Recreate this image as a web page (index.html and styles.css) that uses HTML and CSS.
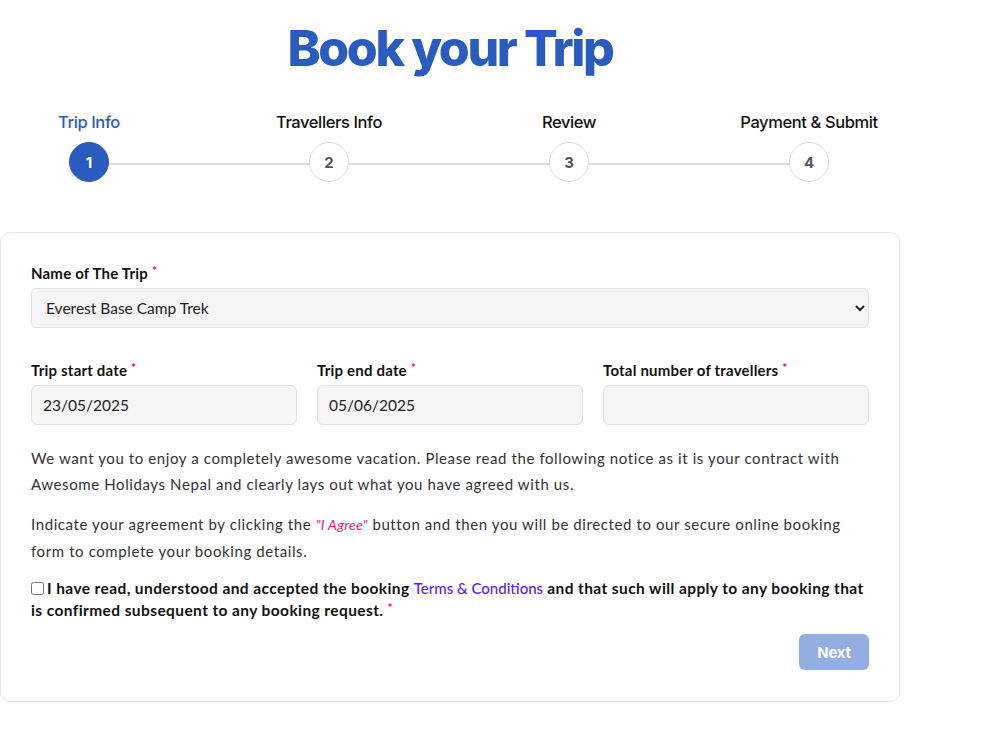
FILE: index.html
```html
<!DOCTYPE html>
<html lang="en">
<head>
    <meta charset="UTF-8">
    <meta name="viewport" content="width=device-width, initial-scale=1.0">
    <title>Book your Trip</title>
    <link rel="stylesheet" href="styles.css">
</head>
<body>
    <div class="wrapper">
        <h1 class="page-title">Book your Trip</h1>

        <div class="steps">
            <div class="steps-line"></div>
            <div class="step active">
                <p class="step-name">Trip Info</p>
                <span class="step-num">1</span>
            </div>
            <div class="step">
                <p class="step-name">Travellers Info</p>
                <span class="step-num">2</span>
            </div>
            <div class="step">
                <p class="step-name">Review</p>
                <span class="step-num">3</span>
            </div>
            <div class="step">
                <p class="step-name">Payment &amp; Submit</p>
                <span class="step-num">4</span>
            </div>
        </div>

        <form class="card">
            <div class="field">
                <label for="trip">Name of The Trip <span class="req">*</span></label>
                <select id="trip">
                    <option>Everest Base Camp Trek</option>
                </select>
            </div>

            <div class="row">
                <div class="field">
                    <label for="start">Trip start date <span class="req">*</span></label>
                    <input id="start" type="text" value="23/05/2025">
                </div>
                <div class="field">
                    <label for="end">Trip end date <span class="req">*</span></label>
                    <input id="end" type="text" value="05/06/2025">
                </div>
                <div class="field">
                    <label for="count">Total number of travellers <span class="req">*</span></label>
                    <input id="count" type="text">
                </div>
            </div>

            <p class="notice">We want you to enjoy a completely awesome vacation. Please read the following notice as it is your contract with Awesome Holidays Nepal and clearly lays out what you have agreed with us.</p>
            <p class="notice">Indicate your agreement by clicking the <em class="agree">"I Agree"</em> button and then you will be directed to our secure online booking form to complete your booking details.</p>

            <label class="terms">
                <input type="checkbox">I have read, understood and accepted the booking <a href="#">Terms &amp; Conditions</a> and that such will apply to any booking that is confirmed subsequent to any booking request. <span class="req">*</span>
            </label>

            <div class="actions">
                <button type="button" class="btn-next">Next</button>
            </div>
        </form>
    </div>
</body>
</html>
```

FILE: styles.css
```css
body {
    margin: 0;
    font-family: "Lato", "Open Sans", sans-serif;
    color: #111;
    background: #fff;
}
.wrapper {
    width: 900px;
}
.page-title {
    margin: 18px 0 0;
    text-align: center;
    font-family: "Inter", sans-serif;
    font-size: 50px;
    font-weight: 800;
    letter-spacing: -2.4px;
    line-height: 60px;
    color: #2a5bbf;
}

/* progress steps */
.steps {
    position: relative;
    display: grid;
    grid-template-columns: repeat(4, 240px);
    width: 960px;
    margin: 33px 0 0 -31px;
}
.steps-line {
    position: absolute;
    left: 120px;
    right: 120px;
    top: 52px;
    height: 2px;
    background: #dcdcdc;
}
.step {
    display: flex;
    flex-direction: column;
    align-items: center;
    position: relative;
}
.step-name {
    margin: 0 0 9px;
    font-family: "Inter", sans-serif;
    font-size: 16.5px;
    font-weight: 500;
    letter-spacing: -0.4px;
    line-height: 22px;
    color: #111;
}
.step-num {
    width: 38px;
    height: 38px;
    border: 1px solid #dcdcdc;
    border-radius: 50%;
    background: #fff;
    display: flex;
    align-items: center;
    justify-content: center;
    font-family: "Inter", sans-serif;
    font-size: 15px;
    font-weight: 700;
    color: #555;
}
.step.active .step-name {
    color: #2a5bbf;
}
.step.active .step-num {
    background: #2a5bbf;
    border-color: #2a5bbf;
    color: #fff;
}

/* form card */
.card {
    margin-top: 50px;
    border: 1px solid #e8e8e8;
    border-radius: 10px;
    padding: 29px 30px 31px;
}
.field {
    display: flex;
    flex-direction: column;
}
.field label {
    font-size: 15px;
    font-weight: 700;
    letter-spacing: 0.2px;
    line-height: 18px;
    margin-bottom: 6px;
    color: #111;
}
.req {
    color: #e01818;
    font-size: 12px;
    vertical-align: 4px;
}
.field select,
.field input {
    height: 40px;
    box-sizing: border-box;
    border: 1px solid #e2e2e2;
    border-radius: 6px;
    background: #f5f5f5;
    font-family: "Lato", sans-serif;
    font-size: 15.5px;
    color: #222;
}
.field select {
    padding: 0 10px;
}
.field input {
    padding: 0 11px;
}
.row {
    display: grid;
    grid-template-columns: repeat(3, 1fr);
    gap: 20px;
    margin-top: 31px;
}
.notice {
    margin: 20px 0 0;
    font-size: 15px;
    letter-spacing: 0.6px;
    line-height: 26px;
    color: #333;
}
.notice + .notice {
    margin-top: 14px;
}
.agree {
    color: #ec1a6c;
    font-size: 14px;
    letter-spacing: 0.3px;
}
.terms {
    display: block;
    margin-top: 14px;
    font-size: 15.5px;
    font-weight: 700;
    letter-spacing: 0.4px;
    line-height: 20px;
    color: #111;
}
.terms input {
    margin: 0 3px 0 0;
    width: 13px;
    height: 13px;
    vertical-align: -1px;
}
.terms a {
    color: #5b22f0;
    font-size: 15px;
    font-weight: 500;
    letter-spacing: 0;
    text-decoration: none;
}
.actions {
    display: flex;
    justify-content: flex-end;
    margin-top: 14px;
}
.btn-next {
    width: 70px;
    height: 36px;
    border: none;
    border-radius: 6px;
    background: #93aee0;
    color: #fff;
    font-family: "Inter", sans-serif;
    font-size: 15px;
    font-weight: 700;
    letter-spacing: -0.3px;
}
```
